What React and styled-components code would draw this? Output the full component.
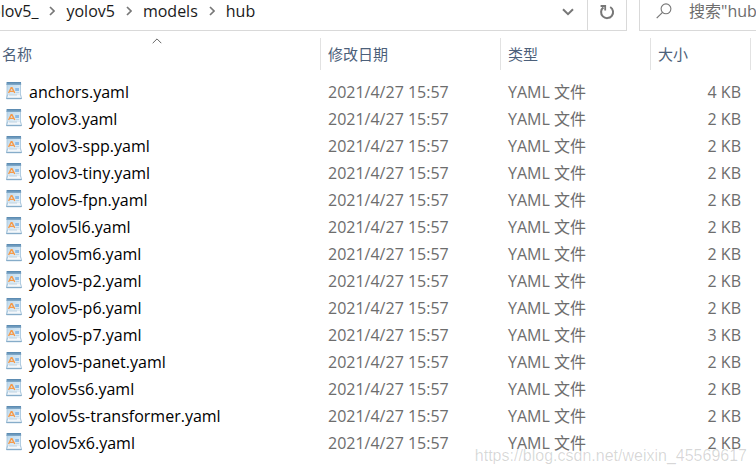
import React, { useState } from "react";
import styled, { createGlobalStyle } from "styled-components";

// Data
const crumbs = ["yolov5_", "yolov5", "models", "hub"];

const files = [
  { name: "anchors.yaml", size: "4 KB" },
  { name: "yolov3.yaml", size: "2 KB" },
  { name: "yolov3-spp.yaml", size: "2 KB" },
  { name: "yolov3-tiny.yaml", size: "2 KB" },
  { name: "yolov5-fpn.yaml", size: "2 KB" },
  { name: "yolov5l6.yaml", size: "2 KB" },
  { name: "yolov5m6.yaml", size: "2 KB" },
  { name: "yolov5-p2.yaml", size: "2 KB" },
  { name: "yolov5-p6.yaml", size: "2 KB" },
  { name: "yolov5-p7.yaml", size: "3 KB" },
  { name: "yolov5-panet.yaml", size: "2 KB" },
  { name: "yolov5s6.yaml", size: "2 KB" },
  { name: "yolov5s-transformer.yaml", size: "2 KB" },
  { name: "yolov5x6.yaml", size: "2 KB" },
];

// Icons
const ChevronRight = () => (
  <svg width="6" height="10" viewBox="0 0 6 10" fill="none" aria-hidden="true">
    <path d="M1 1l4 4-4 4" stroke="#777" strokeWidth="1.7" />
  </svg>
);

const ChevronDown = () => (
  <svg width="12" height="8" viewBox="0 0 12 8" fill="none" aria-hidden="true">
    <path d="M1 1.2l5 5 5-5" stroke="#777" strokeWidth="2" />
  </svg>
);

const RefreshIcon = () => (
  <svg width="16" height="16" viewBox="0 0 16 16" fill="none" aria-hidden="true">
    <path d="M11.2 3a6 6 0 1 1-6.8.4" stroke="#777" strokeWidth="2" />
    <path d="M1.6 2h4.6v4.6" stroke="#777" strokeWidth="1.8" />
  </svg>
);

const SearchIcon = () => (
  <svg width="16" height="16" viewBox="0 0 16 16" fill="none" aria-hidden="true">
    <circle cx="10" cy="5.8" r="4.9" stroke="#777" strokeWidth="1.1" />
    <path d="M6.5 9.3L.7 15.1" stroke="#777" strokeWidth="1.2" />
  </svg>
);

const SortArrow = () => (
  <svg width="10" height="6" viewBox="0 0 10 6" fill="none" aria-hidden="true">
    <path d="M.7 5.2L5 .9l4.3 4.3" stroke="#666" />
  </svg>
);

const FileIcon = () => (
  <svg width="16" height="18" viewBox="0 0 16 18" aria-hidden="true">
    <defs>
      <linearGradient id="page" x1="0" y1="0" x2="1" y2="1">
        <stop offset="0" stopColor="#bcd8ec" />
        <stop offset="1" stopColor="#e9f3fa" />
      </linearGradient>
      <linearGradient id="top" x1="0" y1="0" x2="0" y2="1">
        <stop offset="0" stopColor="#5485ad" />
        <stop offset="1" stopColor="#86aecd" />
      </linearGradient>
    </defs>
    <path d="M.6 2h14.4v10.4l1 3.8-.7 1H.6L0 16.2l.6-3.8z" fill="#a5c4db" />
    <path d="M1.4 3h12.8v9.6H1.4z" fill="url(#page)" />
    <path d="M.6 0h14.4l.2 3H.4z" fill="url(#top)" />
    <path d="M2.4 12.4h11.4l1.2 3.4H1.2z" fill="#f3f7fa" />
    <path d="M3 13h8" stroke="#b4cbdc" strokeWidth=".8" />
    <path d="M.4 16.5h15.2" stroke="#86acc9" />
    <path
      d="M2.6 11l2.6-5.2h.8l2.8 5.2M4.2 9.4h3"
      fill="none"
      stroke="#f59a4a"
      strokeWidth="1.4"
    />
    <path d="M9.2 6h3.8v3H9.2z" fill="#8dbbe6" />
    <path d="M9.8 10.6h3.4" stroke="#a9c9e2" strokeWidth=".8" />
  </svg>
);

const App = () => {
  // State
  const [query, setQuery] = useState("");
  return (
    <StyledExplorer>
      <GlobalStyle />
      <StyledToolbar>
        <StyledAddress>
          <StyledCrumbs aria-label="路径">
            {crumbs.map((crumb, i) => (
              <React.Fragment key={crumb}>
                {i > 0 && <ChevronRight />}
                <a href={`#${crumb}`}>{crumb}</a>
              </React.Fragment>
            ))}
          </StyledCrumbs>
          <StyledToolButton type="button" aria-label="历史记录">
            <ChevronDown />
          </StyledToolButton>
          <StyledToolButton type="button" aria-label="刷新" $divided>
            <RefreshIcon />
          </StyledToolButton>
        </StyledAddress>
        <StyledSearch>
          <SearchIcon />
          <input
            type="text"
            aria-label="搜索"
            placeholder={'搜索"hub"'}
            value={query}
            onChange={(e) => setQuery(e.target.value)}
          />
        </StyledSearch>
      </StyledToolbar>

      <StyledTable>
        <thead>
          <tr>
            <StyledHeading>
              <StyledSortButton type="button">
                <SortArrow />
                <span>名称</span>
              </StyledSortButton>
            </StyledHeading>
            <StyledHeading $width="180px">
              <StyledSortButton type="button">修改日期</StyledSortButton>
            </StyledHeading>
            <StyledHeading $width="150px">
              <StyledSortButton type="button">类型</StyledSortButton>
            </StyledHeading>
            <StyledHeading $width="100px">
              <StyledSortButton type="button">大小</StyledSortButton>
            </StyledHeading>
            <StyledHeading as="td" $width="6px" />
          </tr>
        </thead>
        <tbody>
          {files.map((file) => (
            <tr key={file.name}>
              <StyledCell $name>
                <StyledFile>
                  <FileIcon />
                  <span>{file.name}</span>
                </StyledFile>
              </StyledCell>
              <StyledCell>2021/4/27 15:57</StyledCell>
              <StyledCell>YAML 文件</StyledCell>
              <StyledCell $align="right">{file.size}</StyledCell>
              <td />
            </tr>
          ))}
        </tbody>
      </StyledTable>
      <StyledWatermark>https://blog.csdn.net/weixin_45569617</StyledWatermark>
    </StyledExplorer>
  );
};

// Styled
const GlobalStyle = createGlobalStyle`
  * {
    box-sizing: border-box;
  }

  body {
    margin: 0;
    background: #fff;
    overflow-x: hidden;
  }

  body, button, input {
    font-family: "Open Sans", "Noto Sans CJK SC", sans-serif;
    font-size: 16px;
  }

  button {
    padding: 0;
    border: 0;
    background: none;
  }
`;

const StyledExplorer = styled.main`
  position: relative;
  min-height: 100vh;
`;

const StyledToolbar = styled.header`
  display: flex;
  gap: 12px;
  height: 31px;
`;

const StyledAddress = styled.div`
  display: flex;
  flex: 1;
  min-width: 0;
  border: solid #d9d9d9;
  border-width: 0 1px 1px 0;
`;

const StyledCrumbs = styled.nav`
  display: flex;
  flex: 1;
  align-items: center;
  gap: 11px;
  min-width: 0;
  margin-left: -17px;
  padding-bottom: 8px;

  a {
    color: #1a1a1a;
    text-decoration: none;
  }
`;

const StyledToolButton = styled.button`
  display: flex;
  align-items: center;
  justify-content: center;
  width: 39px;
  padding-bottom: 6px;
  border-left: ${({ $divided }) => ($divided ? "1px solid #d9d9d9" : "0")};
`;

const StyledSearch = styled.div`
  display: flex;
  align-items: center;
  gap: 17px;
  width: 117px;
  padding: 0 0 8px 16px;
  border: solid #d9d9d9;
  border-width: 0 0 1px 1px;

  svg {
    flex: none;
  }

  input {
    flex: 1;
    min-width: 0;
    padding: 0;
    border: 0;
    outline: 0;
    background: none;
  }

  input::placeholder {
    color: #6d6d6d;
  }
`;

const StyledTable = styled.table`
  width: 100%;
  margin-top: 7px;
  border-collapse: collapse;
  table-layout: fixed;
`;

const StyledHeading = styled.th`
  width: ${({ $width }) => $width || "auto"};
  height: 32px;
  padding: 0;
  box-shadow: ${({ $width }) => ($width ? "inset 1px 0 #e2e2e2" : "none")};
`;

const StyledSortButton = styled.button`
  display: flex;
  flex-direction: column;
  justify-content: flex-end;
  width: 100%;
  height: 32px;
  padding: 0 8px 6px;
  color: #4c607a;
  font-size: 15px;
  line-height: 20px;
  text-align: left;

  ${StyledHeading}:first-child & {
    padding: 0 8px 6px 2px;
  }

  svg {
    align-self: center;
  }
`;

const StyledCell = styled.td`
  height: 27px;
  padding: ${({ $name }) => ($name ? "0 0 0 6px" : "0 9px 0 8px")};
  color: ${({ $name }) => ($name ? "#000" : "#6d6d6d")};
  line-height: 20px;
  text-align: ${({ $align }) => $align || "left"};
  white-space: nowrap;

  tr:first-child > & {
    height: 35px;
    padding-top: 8px;
  }
`;

const StyledFile = styled.div`
  display: flex;
  align-items: flex-start;
  gap: 7px;
`;

const StyledWatermark = styled.div`
  position: absolute;
  right: 9px;
  bottom: 9px;
  color: rgba(0, 0, 0, 0.16);
  font-family: "Liberation Sans", sans-serif;
  font-size: 16px;
  line-height: 18px;
  pointer-events: none;
`;

export default App;
